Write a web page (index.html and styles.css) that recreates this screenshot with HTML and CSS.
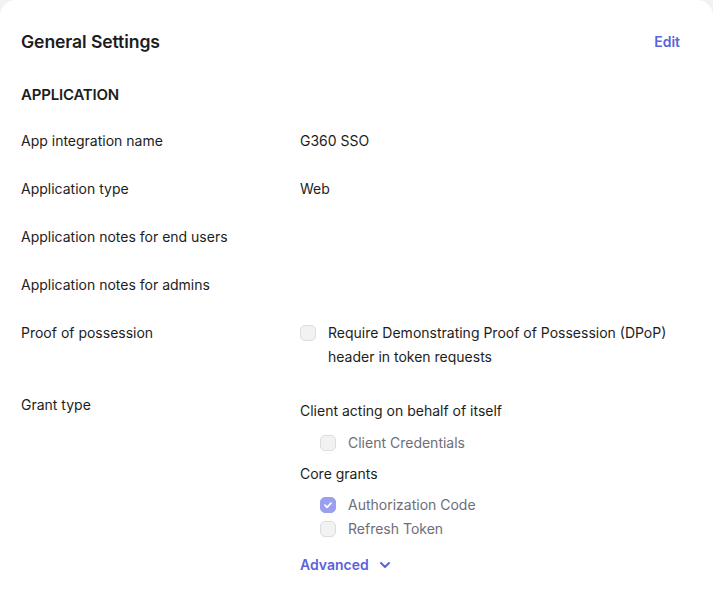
FILE: index.html
```html
<!DOCTYPE html>
<html lang="en">
<head>
<meta charset="utf-8">
<title>General Settings</title>
<link rel="stylesheet" href="styles.css">
</head>
<body>
<section class="card">
  <header class="card-head">
    <h2 class="title">General Settings</h2>
    <a class="edit" href="#">Edit</a>
  </header>
  <h3 class="section">APPLICATION</h3>
  <dl class="rows">
    <div class="row">
      <dt>App integration name</dt>
      <dd>G360 SSO</dd>
    </div>
    <div class="row">
      <dt>Application type</dt>
      <dd>Web</dd>
    </div>
    <div class="row">
      <dt>Application notes for end users</dt>
      <dd></dd>
    </div>
    <div class="row">
      <dt>Application notes for admins</dt>
      <dd></dd>
    </div>
    <div class="row">
      <dt>Proof of possession</dt>
      <dd>
        <label class="check">
          <span class="box"></span>
          <span class="check-text">Require Demonstrating Proof of Possession (DPoP) header in token requests</span>
        </label>
      </dd>
    </div>
    <div class="row">
      <dt>Grant type</dt>
      <dd class="grants">
        <div class="group-title first">Client acting on behalf of itself</div>
        <div class="opt spaced"><span class="box"></span><span class="opt-text">Client Credentials</span></div>
        <div class="group-title">Core grants</div>
        <div class="opt spaced-sm"><span class="box checked"><svg viewBox="0 0 16 16" width="16" height="16"><path d="M4.5 8.2l2.4 2.4 4.6-4.8" fill="none" stroke="#fff" stroke-width="2" stroke-linecap="round" stroke-linejoin="round"/></svg></span><span class="opt-text">Authorization Code</span></div>
        <div class="opt"><span class="box"></span><span class="opt-text">Refresh Token</span></div>
        <a class="advanced" href="#">Advanced <svg viewBox="0 0 12 12" width="12" height="12"><path d="M2 4l4 4 4-4" fill="none" stroke="#5b63dd" stroke-width="2" stroke-linecap="round" stroke-linejoin="round"/></svg></a>
      </dd>
    </div>
  </dl>
</section>
</body>
</html>
```

FILE: styles.css
```css
html, body {
  margin: 0;
  padding: 0;
}
body {
  background: #f2f2f3;
  font-family: Inter, "Noto Sans", "Liberation Sans", sans-serif;
  color: #1d1d21;
  font-size: 14px;
  line-height: 24px;
}
.card {
  background: #ffffff;
  border-radius: 16px 16px 0 0;
  min-height: 613px;
  box-sizing: border-box;
  padding: 28px 33px 0 21px;
}
.card-head {
  display: flex;
  justify-content: space-between;
  align-items: center;
  height: 28px;
}
.title {
  margin: 0;
  font-size: 17.6px;
  font-weight: 600;
  line-height: 28px;
  letter-spacing: -0.1px;
}
.edit {
  color: #5b63dd;
  font-weight: 600;
  text-decoration: none;
  font-size: 14px;
}
.section {
  margin: 27px 0 0;
  font-size: 15px;
  font-weight: 600;
  line-height: 24px;
  letter-spacing: -0.2px;
}
.rows {
  margin: 22px 0 0;
  display: flex;
  flex-direction: column;
  gap: 24px;
}
.row {
  display: grid;
  grid-template-columns: 279px 1fr;
}
.row dt, .row dd {
  margin: 0;
}
.check {
  display: flex;
  align-items: flex-start;
  gap: 12px;
}
.check .box {
  margin-top: 4px;
}
.check-text {
  max-width: 350px;
}
.box {
  flex: none;
  width: 16px;
  height: 16px;
  box-sizing: border-box;
  border: 1.5px solid #dcdce0;
  background: #f2f2f3;
  border-radius: 5px;
  display: inline-flex;
  align-items: center;
  justify-content: center;
}
.box.checked {
  background: #9a9ff0;
  border-color: #9a9ff0;
}
.box svg {
  display: block;
}
.group-title {
  margin-top: 7px;
}
.group-title.first {
  margin-top: 6px;
}
.opt {
  display: flex;
  align-items: center;
  gap: 12px;
  padding-left: 20px;
  color: #6e6e78;
}
.opt.spaced {
  margin-top: 8px;
}
.opt.spaced-sm {
  margin-top: 7px;
}
.advanced {
  display: inline-flex;
  align-items: center;
  gap: 10px;
  margin-top: 12px;
  color: #5b63dd;
  font-weight: 600;
  text-decoration: none;
}
.advanced svg {
  display: block;
}
```
